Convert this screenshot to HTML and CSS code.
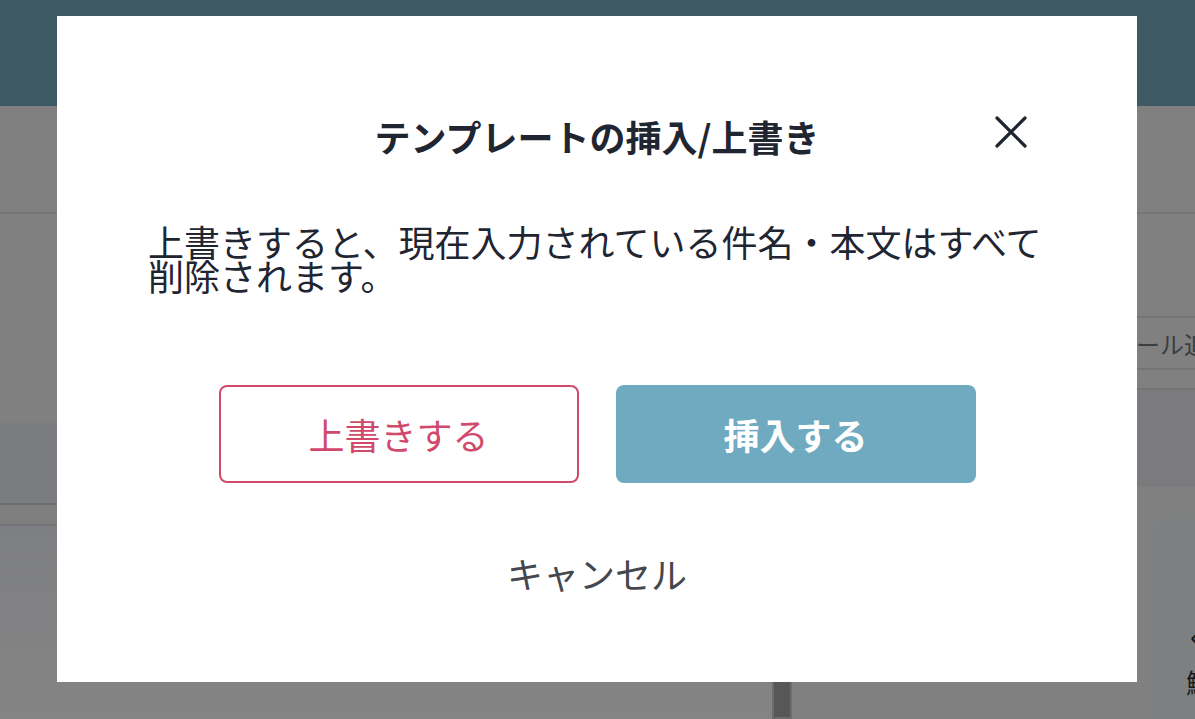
FILE: index.html
```html
<!DOCTYPE html>
<html lang="ja">
<head>
<meta charset="utf-8">
<title>テンプレートの挿入/上書き</title>
<link rel="stylesheet" href="styles.css">
</head>
<body>
<div class="page">
  <header class="topbar"></header>
  <div class="main">
    <section class="left-pane">
      <div class="toolbar"></div>
      <div class="left-spacer"></div>
      <div class="band band-a"></div>
      <div class="band band-b"></div>
      <div class="left-rest">
        <div class="scroll-thumb"></div>
      </div>
    </section>
    <section class="right-pane">
      <div class="toolbar"></div>
      <div class="right-spacer"></div>
      <div class="field-row"><span class="field-text">メール追加</span></div>
      <div class="thin-row"></div>
      <div class="right-gap"></div>
      <div class="right-gap2"></div>
      <div class="card"><p class="card-text">く</p><p class="card-text">鮪</p></div>
    </section>
  </div>
</div>

<div class="overlay">
  <div class="modal" role="dialog" aria-labelledby="modal-title">
    <div class="modal-head">
      <h2 class="modal-title" id="modal-title">テンプレートの挿入/上書き</h2>
      <button class="close-btn" aria-label="閉じる">
        <svg viewBox="0 0 36 36" width="36" height="36"><path d="M5 5 L33 33 M33 5 L5 33" stroke="#1f2531" stroke-width="3.2" stroke-linecap="round" fill="none"/></svg>
      </button>
    </div>
    <p class="modal-text">上書きすると、現在入力されている件名・本文はすべて削除されます。</p>
    <div class="actions">
      <button class="btn btn-outline">上書きする</button>
      <button class="btn btn-primary">挿入する</button>
    </div>
    <button class="cancel">キャンセル</button>
  </div>
</div>
</body>
</html>
```

FILE: styles.css
```css
* { box-sizing: border-box; }
html, body { margin: 0; padding: 0; }
body {
  width: 1195px;
  height: 719px;
  overflow: hidden;
  font-family: "Noto Sans CJK JP", "Noto Sans", sans-serif;
  background: #808080;
  position: relative;
}
.page { width: 100%; height: 100%; display: flex; flex-direction: column; }
.topbar { height: 106px; background: #3d5a65; flex: none; }
.main { flex: 1; display: flex; min-height: 0; }
.left-pane { width: 792px; flex: none; display: flex; flex-direction: column; }
.toolbar { height: 108px; border-bottom: 2px solid #777779; flex: none; }
.left-spacer { height: 209px; flex: none; }
.band { flex: none; }
.band-a { height: 82px; background: #7b7c80; border-bottom: 2px solid #6d6e72; }
.band-b { height: 21px; background: #7f7f7f; border-bottom: 2px solid #737478; }
.left-rest { flex: 1; display: flex; justify-content: flex-end; background: linear-gradient(#7e7f82, #848484); }
.scroll-thumb { width: 20px; background: #575757; border: 2px solid #6c6c6e; border-top: none; }
.right-pane { flex: 1; min-width: 0; overflow: hidden; display: flex; flex-direction: column; }
.right-spacer { height: 102px; flex: none; }
.field-row {
  flex: none;
  height: 54px;
  border-top: 2px solid #747476;
  border-bottom: 2px solid #747476;
  display: flex;
  align-items: center;
  padding-left: 320px;
  color: #3a3f44;
  font-size: 24px;
  white-space: nowrap;
}
.thin-row { flex: none; height: 20px; border-bottom: 2px solid #757577; }
.right-gap { flex: none; height: 97px; background: #7b7b7d; }
.right-gap2 { flex: none; height: 28px; }
.card {
  margin-left: 362px;
  flex: 1;
  background: #7c8081;
  border-radius: 12px 0 0 0;
  padding: 108px 0 0 32px;
  white-space: nowrap;
}
.card-text { margin: 0 0 14px; font-size: 26px; line-height: 30px; color: #1a1a1a; }

.overlay {
  position: absolute;
  inset: 0;
  display: flex;
  justify-content: flex-start;
  align-items: flex-start;
  padding: 16px 0 0 57px;
}
.modal {
  width: 1080px;
  height: 666px;
  background: #ffffff;
  padding: 94px 91px 0 91px;
  display: flex;
  flex-direction: column;
  align-items: center;
  color: #1f2531;
}
.modal-head {
  width: 100%;
  position: relative;
  display: flex;
  justify-content: center;
}
.modal-title {
  margin: 0;
  font-size: 36px;
  line-height: 52px;
  font-weight: 700;
  color: #1f2531;
}
.close-btn {
  position: absolute;
  right: 18px;
  top: 3px;
  width: 36px;
  height: 36px;
  padding: 0;
  border: none;
  background: none;
  cursor: pointer;
}
.close-btn svg { display: block; }
.modal-text {
  margin: 62px 0 0;
  width: 100%;
  font-size: 36px;
  line-height: 34px;
  color: #1f2531;
}
.actions {
  margin-top: 93px;
  display: flex;
  gap: 37px;
}
.btn {
  width: 360px;
  height: 98px;
  border-radius: 8px;
  font-family: inherit;
  font-size: 36px;
  cursor: pointer;
}
.btn-outline {
  background: #fff;
  border: 2px solid #d14a6b;
  color: #d14a6b;
}
.btn-primary {
  background: #70aac0;
  border: none;
  color: #fff;
  font-weight: 700;
}
.cancel {
  margin-top: 66px;
  background: none;
  border: none;
  font-family: inherit;
  font-size: 36px;
  line-height: 48px;
  color: #44474d;
  cursor: pointer;
  padding: 0;
}
```
